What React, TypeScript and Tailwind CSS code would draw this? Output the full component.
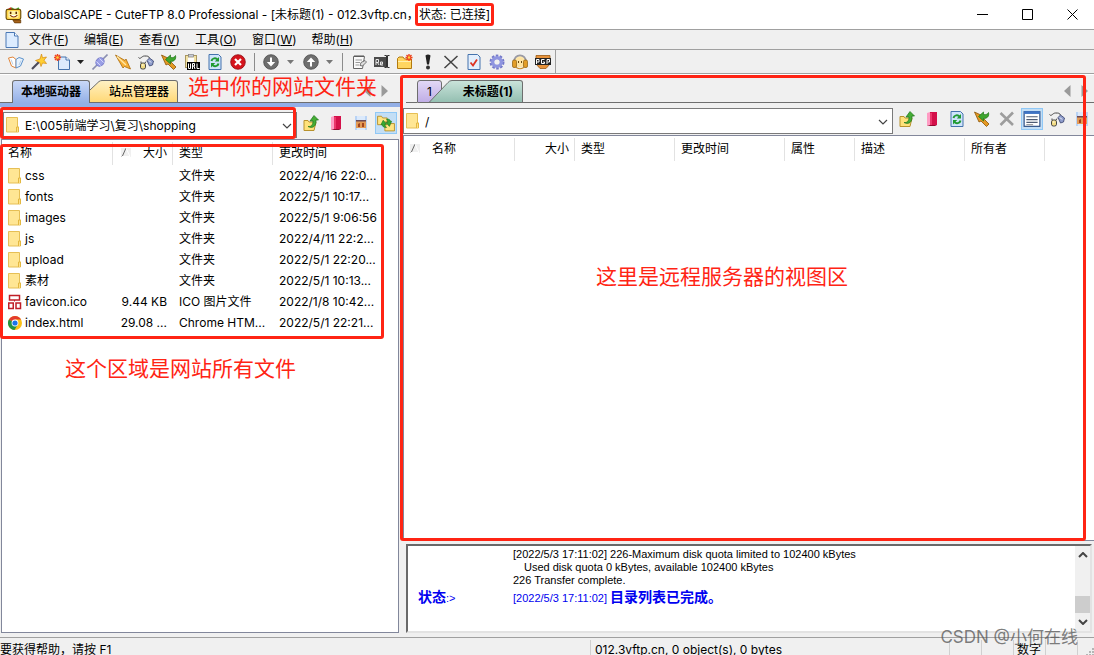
import React from "react";

type IconProps = { children: React.ReactNode; size?: number };

const Glyph: React.FC<IconProps> = ({ children, size = 16 }) => (
  <svg width={size} height={size} viewBox="0 0 16 16" className="shrink-0" aria-hidden="true">
    {children}
  </svg>
);

const AppIcon = () => (
  <Glyph size={18}>
    <path d="M3 3 6 1l3 2 3-2 1 2z" fill="#3fae2a" />
    <path d="M2 3l3-2 2 2z" fill="#e02020" />
    <rect x="1" y="3" width="13" height="9" rx="1.5" fill="#ffd64a" stroke="#6b4a00" />
    <rect x="3" y="4.500" width="9" height="6" rx="1" fill="#fff3a8" />
    <path d="M5 5v2M10 5v2" stroke="#5b2a00" strokeWidth="1.4" />
    <path d="M4.500 8c2 2.400 4.500 2.400 6.500 0" fill="#fff" stroke="#8a3a00" />
    <path d="M7 12.500h7v2.500H8.500z" fill="#a8641c" stroke="#5b3200" strokeWidth=".6" />
  </Glyph>
);

const PageIcon = () => (
  <Glyph>
    <path d="M2 .5h8.500L14 4v11.500H2z" fill="#dcecff" stroke="#4a78b5" />
    <path d="M10.500.5V4H14" fill="#fff" stroke="#4a78b5" />
  </Glyph>
);

const FolderIcon = () => (
  <Glyph>
    <path d="M.5.5h11v9.500h1v5H.5z" fill="#ffe694" stroke="#e6bf55" />
    <path d="M10.500 15v-5h2v5" fill="#ffe08a" stroke="#e3b840" />
  </Glyph>
);

const IcoFileIcon = () => (
  <Glyph>
    <g fill="#fff" stroke="#c01f28" strokeWidth="1.5">
      <rect x="1.500" y="1.500" width="10" height="4.500" />
      <rect x=".75" y="9" width="4.500" height="5.500" />
      <rect x="8" y="9" width="4.500" height="5.500" />
    </g>
    <path d="M6.500 6v1.500" fill="none" stroke="#c01f28" />
  </Glyph>
);

const ChromeIcon = () => (
  <Glyph>
    <circle cx="7" cy="8" r="7" fill="#fbc116" />
    <path d="M7 8 .9 4.500A7 7 0 0 1 13.100 4.500H7z" fill="#e33b2e" />
    <path d="M7 8 .9 4.500A7 7 0 0 0 6.500 15l3-5z" fill="#229342" />
    <circle cx="7" cy="8" r="3.400" fill="#fff" />
    <circle cx="7" cy="8" r="2.600" fill="#1a73e8" />
  </Glyph>
);

const BookIcon = () => (
  <Glyph>
    <path d="M.5 4 5 3l3 2.500V14l-4.500-2z" fill="#fff" stroke="#e0853a" />
    <path d="M8 5.500 11 3.500l4.500 1.500-3 7L8 14z" fill="#e8f2fc" stroke="#5d92cc" />
    <path d="m3 5.500 2 5M13 6.500l-2 4.500" stroke="#b9cfe6" />
  </Glyph>
);

const WandIcon = () => (
  <Glyph>
    <path d="m1 15 7-7" stroke="#4b4b5a" strokeWidth="2.200" />
    <path d="m10.500 0 1 3.800 4-.8-2.500 3.200 2.500 3.300-4-.5L10 12.500 8.800 8.500 4.500 6.500 9 5z" fill="#ffcf33" stroke="#d58a10" strokeWidth=".7" />
  </Glyph>
);

const NewIcon = () => (
  <Glyph>
    <path d="M4.500 3H12l3.500 3v9.500h-11z" fill="#dbeafd" stroke="#4573ad" />
    <path d="M12 3v3h3.500" fill="#fff" stroke="#4573ad" />
    <path d="M3.500 0v7M0 3.500h7M1 1l5 5M6 1 1 6" stroke="#f0441c" strokeWidth="1.500" />
    <circle cx="3.500" cy="3.500" r="1.300" fill="#ffd23a" />
  </Glyph>
);

const ConnectIcon = () => (
  <Glyph>
    <path d="m.5 15.500 5-5M10.500 5.500l5-5" stroke="#8b8fb0" strokeWidth="1.600" />
    <ellipse cx="8" cy="8" rx="4.500" ry="3.800" transform="rotate(-45 8 8)" fill="#9a9fe6" stroke="#7c80cc" />
    <path d="M4.500 7.500 8.500 11.500M7.500 4.500l4 4" stroke="#d5d7fb" />
  </Glyph>
);

const TransferIcon = () => (
  <Glyph>
    <path d="m.5 1 9.500 5.500 1-1.500 4.500 10-6-2.500-1.500 1.500z" fill="#f7b038" stroke="#a8690c" strokeWidth=".8" />
    <path d="m2 2.500 9 8.500" stroke="#ffe9a8" strokeWidth="1.300" />
  </Glyph>
);

const LinkIcon = () => (
  <Glyph>
    <path d="M.5 3.500c2 2.500 3-1.500 6-1.500s4 0 5 2" fill="none" stroke="#444" />
    <path d="M9 6.500 11.500 4l4 3-1 4-3 1z" fill="#8f9dcc" stroke="#36406b" strokeWidth=".8" />
    <path d="m11 6.500 2 2" stroke="#fff" />
    <path d="M3 9V7.500M7 9l1-1.500" stroke="#444" />
    <rect x="2.500" y="9" width="5" height="6" rx="1.800" fill="#f2dc83" stroke="#454545" />
    <path d="M4 11h1.500" stroke="#fff" />
  </Glyph>
);

const QuickIcon = () => (
  <Glyph>
    <path d="m.5 1 4.500 10 2-1 5.500 5.500 2.500-2.500-5.500-5.500L11 6z" fill="#e59a25" stroke="#8a5408" strokeWidth=".8" />
    <path d="m4.500 5.500 5-4.500v2.500C12 4 14 3 14.500 1.500c1 4-1.500 6-5 6V10z" fill="#3fa62f" stroke="#1d7414" strokeWidth=".7" />
  </Glyph>
);

const UrlIcon = () => (
  <Glyph>
    <rect x="1.500" y="1.500" width="11" height="12" fill="#f3e3a6" stroke="#a89660" />
    <rect x="4" y="3.500" width="6" height="6" fill="#fdfdfd" />
    <rect x="4.500" y=".5" width="5" height="2.500" fill="#c7cbd6" stroke="#777" strokeWidth=".6" />
    <rect x="3" y="8" width="13" height="8" fill="#000" />
    <path d="M4.500 9.500v5h2v-5M8.500 15V9.500h2v2.500h-2m1.500 0 1 3M13 9.500v5h2.500" fill="none" stroke="#fff" />
  </Glyph>
);

const RefreshIcon = () => (
  <Glyph>
    <path d="M2 .5h9.500L14 3v12.500H2z" fill="#cfe4fb" stroke="#4573ad" />
    <path d="M4.500 7C5 4 9 3.500 10.500 5.500" fill="none" stroke="#209a32" strokeWidth="2" />
    <path d="M12 3v4.500H7.800zM4 13.500V9h4.200z" fill="#209a32" />
    <path d="M11.500 9.500c-.5 3-4.500 3.500-6 1.500" fill="none" stroke="#209a32" strokeWidth="2" />
  </Glyph>
);

const StopIcon = () => (
  <Glyph>
    <circle cx="8" cy="8" r="7.300" fill="#d5141c" stroke="#8f0a10" strokeWidth=".8" />
    <path d="m5 5 6 6m0-6-6 6" stroke="#fff" strokeWidth="2.200" />
  </Glyph>
);

const RoundArrowIcon: React.FC<{ up?: boolean }> = ({ up }) => (
  <Glyph>
    <circle cx="8" cy="8" r="7.300" fill="#6e6e6e" stroke="#4a4a4a" strokeWidth=".8" />
    {up ? (
      <path d="M8 3.500 3.800 8H7v4.500h2V8h3.200z" fill="#fff" />
    ) : (
      <path d="M8 12.500 3.800 8H7V3.500h2V8h3.200z" fill="#fff" />
    )}
  </Glyph>
);

const EditIcon = () => (
  <Glyph>
    <path d="M2.500 2.500h11l-2 12h-9z" fill="#fafafa" stroke="#666" />
    <path d="M4 1v2m2-2v2m2-2v2m2-2v2m2-2v2" stroke="#555" />
    <path d="M4.500 6H11m-6.500 2.500H9m-4.500 2.500H8" stroke="#999" />
    <path d="m9 11.500 1-3 4-2 1.500 1.500-4 4z" fill="#ddd" stroke="#555" strokeWidth=".8" />
  </Glyph>
);

const RenameIcon = () => (
  <Glyph>
    <rect x="0" y="3" width="12" height="10" fill="#4b4b4b" />
    <path d="M2 11V5.500h2.500V8.500H2m1.500 0L5 11m1.500-3h2v2h-2V8zm0 0v3H9" fill="none" stroke="#e8e8e8" />
    <path d="M10.500 1.500h2v12h-2M15.500 1.500h-2v12h2" fill="none" stroke="#333" />
  </Glyph>
);

const NewFolderIcon = () => (
  <Glyph>
    <path d="M.5 4.500 2 3h4l1.500 2h7v9.500H.5z" fill="#ffd560" stroke="#b27a10" />
    <path d="M1 7.500h13" stroke="#fff0b0" />
    <path d="M12 0v7M8.500 3.500h7M9.500 1l5 5M14.500 1l-5 5" stroke="#ed401c" strokeWidth="1.400" />
    <circle cx="12" cy="3.500" r="1.200" fill="#ffd23a" />
  </Glyph>
);

const PriorityIcon = () => (
  <Glyph>
    <path d="M5.500 1.500Q8-.5 10.500 1.500L9 10.500H7z" fill="#222" />
    <circle cx="8" cy="13.500" r="2" fill="#333" />
  </Glyph>
);

const CrossIcon: React.FC<{ muted?: boolean }> = ({ muted }) => (
  <Glyph>
    {muted ? (
      <path d="m1.500 2 12.500 12m0-12.500L1.500 14" stroke="#9d9d9d" strokeWidth="2.600" />
    ) : (
      <path d="m1.500 2 13 12.500m0-12.500-13 12" stroke="#444" strokeWidth="1.500" />
    )}
  </Glyph>
);

const CheckPageIcon = () => (
  <Glyph>
    <path d="M2 .5h9.500L14 3v12.500H2z" fill="#e3effd" stroke="#4573ad" />
    <path d="m4.500 8.500 2.500 3 4-6" fill="none" stroke="#dd3322" strokeWidth="1.800" />
  </Glyph>
);

const GearIcon = () => (
  <Glyph>
    <circle cx="8" cy="8" r="6" fill="none" stroke="#7479c9" strokeWidth="3" strokeDasharray="2.400 1.370" />
    <circle cx="8" cy="8" r="4.300" fill="none" stroke="#8f95e0" strokeWidth="3.400" />
    <circle cx="8" cy="8" r="2.300" fill="#f0f0f0" />
  </Glyph>
);

const HeadsetIcon = () => (
  <Glyph>
    <path d="M2 8.500C1.500-1 14.500-1 14 8.500" fill="#ffe9b0" stroke="#9a9aa4" strokeWidth="1.800" />
    <circle cx="8" cy="8.500" r="5" fill="#ffe3a0" />
    <path d="M4 12.500q4 3.500 8 0v1.500q-4 2.500-8 0z" fill="#c98d2c" />
    <rect x=".5" y="6" width="4" height="7.500" rx="1.500" fill="#e39d28" stroke="#8a5b0c" strokeWidth=".7" />
    <rect x="11.500" y="6" width="4" height="7.500" rx="1.500" fill="#e39d28" stroke="#8a5b0c" strokeWidth=".7" />
    <path d="M6.500 7v2m3-2v2" stroke="#6b4a12" />
  </Glyph>
);

const PgpIcon = () => (
  <Glyph>
    <path d="M1 1.500h14V10l-4 4.500H5L1 10z" fill="#e7923a" stroke="#9a5a14" strokeWidth=".8" />
    <rect x="0" y="4" width="16" height="7" fill="#222" />
    <path d="M1.500 10V5.500H4V8H2M9.500 5.500h-3v4h3V8H8M12 10V5.500h2.500V8h-2" fill="none" stroke="#fff" />
  </Glyph>
);

const UpFolderIcon = () => (
  <Glyph>
    <path d="M1 5.500h4l1 1.500h7l-2 8.500H1z" fill="#ffe27a" stroke="#b8922c" />
    <path d="M5 11.500c3.500.5 5-2 5-5.500H7L11 .5 15.500 5H13c.5 6-3 9-8 6.500z" fill="#45ad36" stroke="#1e7318" strokeWidth=".7" />
  </Glyph>
);

const BookmarkIcon = () => (
  <Glyph>
    <path d="m3 2 3-1v13l-3 1z" fill="#ff9cc4" />
    <path d="M6 1h7v13H6z" fill="#d4104a" />
    <path d="M7 2v12" stroke="#ff5f8d" />
    <path d="M3 15h8l2-1H6z" fill="#8f0a30" />
  </Glyph>
);

const PictureIcon = () => (
  <Glyph>
    <rect x="2" y="1" width="12" height="14" fill="#b9d3f5" />
    <path d="M4 1h8v4H4z" fill="#dbe9fb" />
    <rect x="3" y="5" width="10" height="8" fill="#e39a55" />
    <path d="M3 5h10v1.500H3z" fill="#6b4a58" />
    <path d="M5 12V9l2-1v4zM9 12V8h2v4z" fill="#a2451f" />
    <path d="M4 13h8v2H4z" fill="#dbe9fb" />
  </Glyph>
);

const SyncFoldersIcon = () => (
  <Glyph size={18}>
    <path d="M.5 2h3.500l1 1.500h4v6H.5zM7 7h3l1 1.500h4.500V15H7z" fill="#ffe483" stroke="#b48d28" strokeWidth=".8" />
    <path d="m3.500 9.500 2-4 3 3.500H7c0 2 1 2 1.500 3-3 0-3.500-1-3.800-2.500zM13 6.500l-2 4.500-3-3.500h1.500C9.500 5.500 9 5.500 8.500 4.500c3 0 3.200 1 3.500 2z" fill="#36a832" stroke="#13701a" strokeWidth=".5" />
  </Glyph>
);

const DetailsIcon = () => (
  <Glyph size={18}>
    <rect x="1" y="1.500" width="14" height="13" fill="#fff" stroke="#24467e" />
    <rect x="1" y="1" width="14" height="2.500" fill="#3f74c4" />
    <path d="M3 6h10M3 8.500h10M3 11h10" stroke="#4d5b73" />
    <path d="M3 13h6" stroke="#999" />
  </Glyph>
);

const Triangle: React.FC<{ dir: "left" | "right" }> = ({ dir }) => (
  <svg width="7" height="12" viewBox="0 0 7 12" aria-hidden="true">
    <path d={dir === "left" ? "M6.500 0v12L0 6z" : "M.5 0v12L7 6z"} fill="#9a9a9a" />
  </svg>
);

const Chevron: React.FC<{ className?: string; up?: boolean; bold?: boolean }> = ({ className, up, bold }) => (
  <svg width="10" height="6" viewBox="0 0 10 6" className={className} aria-hidden="true">
    <path d={up ? "m1 5 4-4 4 4" : "m1 1 4 4 4-4"} fill="none" stroke="#444" strokeWidth={bold ? 2 : 1.2} />
  </svg>
);

const SortMark = () => (
  <svg width="10" height="9" viewBox="0 0 10 9" className="shrink-0" aria-hidden="true">
    <rect width="10" height="9" fill="#f0f0f0" />
    <path d="M1 9 5 0" stroke="#666" />
    <path d="m5 0 4 8.500H1" fill="none" stroke="#fff" />
  </svg>
);

const menus = [
  { label: "文件", key: "F" },
  { label: "编辑", key: "E" },
  { label: "查看", key: "V" },
  { label: "工具", key: "O" },
  { label: "窗口", key: "W" },
  { label: "帮助", key: "H" },
];

const files = [
  { name: "css", icon: <FolderIcon />, size: "", type: "文件夹", time: "2022/4/16 22:0..." },
  { name: "fonts", icon: <FolderIcon />, size: "", type: "文件夹", time: "2022/5/1 10:17..." },
  { name: "images", icon: <FolderIcon />, size: "", type: "文件夹", time: "2022/5/1 9:06:56" },
  { name: "js", icon: <FolderIcon />, size: "", type: "文件夹", time: "2022/4/11 22:2..." },
  { name: "upload", icon: <FolderIcon />, size: "", type: "文件夹", time: "2022/5/1 22:20..." },
  { name: "素材", icon: <FolderIcon />, size: "", type: "文件夹", time: "2022/5/1 10:13..." },
  { name: "favicon.ico", icon: <IcoFileIcon />, size: "9.44 KB", type: "ICO 图片文件", time: "2022/1/8 10:42..." },
  { name: "index.html", icon: <ChromeIcon />, size: "29.08 ...", type: "Chrome HTM...", time: "2022/5/1 22:21..." },
];

const ToolButton: React.FC<{ label: string; children: React.ReactNode }> = ({ label, children }) => (
  <button type="button" aria-label={label} className="flex h-[22px] w-[23px] shrink-0 items-center justify-center">
    {children}
  </button>
);

const DropButton: React.FC<{ label: string; muted?: boolean; narrow?: boolean }> = ({ label, muted, narrow }) => (
  <button
    type="button"
    aria-label={label}
    className={`flex h-[22px] shrink-0 items-center justify-center ${narrow ? "w-[15px]" : "w-[17px]"}`}
  >
    <svg width="7" height="4" viewBox="0 0 7 4" aria-hidden="true">
      <path d="M0 0h7L3.500 4z" fill={muted ? "#777" : "#222"} />
    </svg>
  </button>
);

const Divider = () => <div className="mr-1 ml-[5px] h-[18px] w-px shrink-0 bg-[#8c8c8c]" />;

const PaneButton: React.FC<{ label: string; active?: boolean; children: React.ReactNode }> = ({ label, active, children }) => (
  <button
    type="button"
    aria-label={label}
    className={`flex h-[22px] w-[22px] shrink-0 items-center justify-center ${
      active ? "border border-[#90c8f6] bg-[#c3def5]" : ""
    }`}
  >
    {children}
  </button>
);

const PathBox: React.FC<{ label: string; value: string; children?: React.ReactNode }> = ({ label, value, children }) => (
  <div className="relative h-[26px] min-w-0 flex-1 border border-[#7a7a7a] bg-white">
    <div className="pointer-events-none absolute top-1 left-0.5">
      <FolderIcon />
    </div>
    <select
      aria-label={label}
      defaultValue={value}
      className="block h-6 w-full appearance-none bg-transparent pt-0.5 pl-[21px] text-[12px] leading-5 outline-none"
    >
      <option>{value}</option>
    </select>
    <Chevron className="pointer-events-none absolute top-[10px] right-1" />
    {children}
  </div>
);

const MarkBox: React.FC<{ className: string }> = ({ className }) => (
  <div className={`pointer-events-none absolute z-20 rounded-[3px] border-3 border-[#ff2414] ${className}`} />
);

const MarkText: React.FC<{ className: string; children: React.ReactNode }> = ({ className, children }) => (
  <p className={`pointer-events-none absolute z-20 text-[21px] leading-6 whitespace-nowrap text-[#ff2414] ${className}`}>
    {children}
  </p>
);

const headCell = "relative h-[25px] px-1.5 font-normal";

const ColumnEdge = () => <span className="absolute top-0.5 right-0 h-[23px] w-px bg-[#e2e2e2]" />;

const LocalPane = () => (
  <section className="relative flex w-[400px] shrink-0 flex-col">
    <div className="flex h-[29px] items-end">
      <div className="h-px w-3 shrink-0 bg-[#6e6e6e]" />
      <button
        type="button"
        className="h-[23px] w-[78px] rounded-t-[3px] border border-b-0 border-[#6e6e6e] bg-linear-to-b from-[#c9d8f7] to-[#93afe6] text-[12px] font-bold"
      >
        本地驱动器
      </button>
      <button type="button" className="flex h-[23px] text-[12px]">
        <svg width="15" height="23" viewBox="0 0 15 23" aria-hidden="true">
          <defs>
            <linearGradient id="yellowTab" x1="0" y1="0" x2="0" y2="1">
              <stop offset="0" stopColor="#fff1c4" />
              <stop offset="1" stopColor="#ffd875" />
            </linearGradient>
          </defs>
          <path d="M0 10 9 1.500Q10.500.5 12 .5h3v22H0z" fill="url(#yellowTab)" />
          <path d="M0 10 9 1.500Q10.500.5 12 .5h3M0 22.500h15" fill="none" stroke="#6e6e6e" />
        </svg>
        <span className="h-[23px] w-[73px] rounded-tr-[3px] border border-l-0 border-[#6e6e6e] bg-linear-to-b from-[#fff1c4] to-[#ffd875] pr-2 text-right leading-[21px] font-medium">
          站点管理器
        </span>
      </button>
      <div className="flex h-[23px] flex-1 items-center justify-end gap-2.5 border-b border-[#6e6e6e] pr-3">
        <Triangle dir="left" />
        <Triangle dir="right" />
      </div>
    </div>
    <div className="h-1 shrink-0 bg-[#93afe6]" />
    <div className="flex h-8 shrink-0 items-start gap-[3px] px-[3px] pt-[5px]">
      <PathBox label="本地路径" value="E:\005前端学习\复习\shopping">
        <MarkBox className="-top-1.5 right-0 -bottom-0.5 -left-1" />
      </PathBox>
      <PaneButton label="向上"><UpFolderIcon /></PaneButton>
      <PaneButton label="书签"><BookmarkIcon /></PaneButton>
      <PaneButton label="缩略图"><PictureIcon /></PaneButton>
      <PaneButton label="同步浏览" active><SyncFoldersIcon /></PaneButton>
    </div>
    <div className="relative mx-px mb-1 min-h-0 flex-1 border border-[#82879b] bg-white">
      <table className="w-[381px] table-fixed text-left whitespace-nowrap">
        <colgroup>
          <col className="w-[111px]" />
          <col className="w-[60px]" />
          <col className="w-[100px]" />
          <col className="w-[110px]" />
        </colgroup>
        <thead>
          <tr>
            <th className={headCell}>名称<ColumnEdge /></th>
            <th className={`${headCell} text-right`}>
              <span className="flex items-center justify-between pl-0.5"><SortMark />大小</span>
              <ColumnEdge />
            </th>
            <th className={headCell}>类型<ColumnEdge /></th>
            <th className={headCell}>更改时间</th>
          </tr>
        </thead>
        <tbody>
          {files.map(file => (
            <tr key={file.name} className="h-[21px]">
              <td className="p-0 pl-1.5">
                <span className="flex items-center gap-px">{file.icon}{file.name}</span>
              </td>
              <td className="p-0 pr-1.5 text-right">{file.size}</td>
              <td className="p-0 pl-1.5">{file.type}</td>
              <td className="p-0 pl-1.5">{file.time}</td>
            </tr>
          ))}
        </tbody>
      </table>
      <MarkBox className="top-1 -left-0.5 h-[195px] w-[384px]" />
      <MarkText className="top-[217px] left-[63px]">这个区域是网站所有文件</MarkText>
    </div>
    <MarkText className="top-px left-[188px]">选中你的网站文件夹</MarkText>
  </section>
);

const RemotePane = () => (
  <section className="relative ml-[3px] flex min-w-0 flex-1 flex-col">
    <div className="flex h-[29px] shrink-0 items-end">
      <div className="ml-[3px] h-px w-[11px] shrink-0 bg-[#6e6e6e]" />
      <button
        type="button"
        className="h-[23px] w-[25px] rounded-t-[3px] border border-[#6e6e6e] bg-linear-to-b from-[#e2d8f6] to-[#c0aee6] text-[12px]"
      >
        1
      </button>
      <button type="button" className="-ml-[13px] flex h-[23px] text-[12px] font-bold">
        <svg width="23" height="23" viewBox="0 0 23 23" aria-hidden="true">
          <defs>
            <linearGradient id="greenTab" x1="0" y1="0" x2="0" y2="1">
              <stop offset="0" stopColor="#c9e3da" />
              <stop offset="1" stopColor="#94bfb1" />
            </linearGradient>
          </defs>
          <path d="M0 22.500 19 2.500Q20.500.5 23 .5v22z" fill="url(#greenTab)" />
          <path d="M0 22.500 19 2.500Q20.500.5 23 .5M0 22.500h23" fill="none" stroke="#6e6e6e" />
        </svg>
        <span className="h-[23px] w-[71px] rounded-tr-[3px] border border-l-0 border-[#6e6e6e] bg-linear-to-b from-[#c9e3da] to-[#94bfb1] pr-[9px] text-right leading-[21px]">
          未标题(1)
        </span>
      </button>
      <div className="flex h-[23px] flex-1 items-center justify-end gap-2.5 border-b border-[#6e6e6e] pr-1.5">
        <Triangle dir="left" />
        <Triangle dir="right" />
      </div>
    </div>
    <div className="flex h-8 shrink-0 items-start gap-[3px] pt-[5px] pr-px">
      <PathBox label="远程路径" value="/" />
      <PaneButton label="向上"><UpFolderIcon /></PaneButton>
      <PaneButton label="书签"><BookmarkIcon /></PaneButton>
      <PaneButton label="刷新"><RefreshIcon /></PaneButton>
      <PaneButton label="快速连接"><QuickIcon /></PaneButton>
      <PaneButton label="停止"><CrossIcon muted /></PaneButton>
      <PaneButton label="详细信息" active><DetailsIcon /></PaneButton>
      <PaneButton label="链接"><LinkIcon /></PaneButton>
      <PaneButton label="缩略图"><PictureIcon /></PaneButton>
    </div>
    <div className="relative min-h-0 flex-1 border border-r-0 border-[#82879b] bg-white">
      <table className="w-[641px] table-fixed text-left whitespace-nowrap">
        <colgroup>
          <col className="w-[111px]" />
          <col className="w-[60px]" />
          <col className="w-[100px]" />
          <col className="w-[110px]" />
          <col className="w-[70px]" />
          <col className="w-[110px]" />
          <col className="w-[80px]" />
        </colgroup>
        <thead>
          <tr>
            <th className={headCell}>
              <span className="flex items-center gap-3"><SortMark />名称</span>
              <ColumnEdge />
            </th>
            <th className={`${headCell} text-right`}>大小<ColumnEdge /></th>
            {["类型", "更改时间", "属性", "描述", "所有者"].map(title => (
              <th key={title} className={headCell}>{title}<ColumnEdge /></th>
            ))}
          </tr>
        </thead>
      </table>
      <MarkText className="top-[129px] left-[192px]">这里是远程服务器的视图区</MarkText>
    </div>
    <div className="mt-[3px] mr-0.5 mb-1 ml-[3px] flex h-[89px] shrink-0 border-2 border-t-[#696969] border-r-[#e3e3e3] border-b-[#e3e3e3] border-l-[#696969] bg-white">
      <div className="min-w-0 flex-1 overflow-hidden pt-0.5 pl-[105px] font-['Liberation_Sans','Noto_Sans_CJK_SC',sans-serif] text-[11px] leading-[13px] whitespace-nowrap">
        <p>[2022/5/3 17:11:02] 226-Maximum disk quota limited to 102400 kBytes</p>
        <p className="pl-[11px]">Used disk quota 0 kBytes, available 102400 kBytes</p>
        <p>226 Transfer complete.</p>
        <p className="-ml-[95px] flex leading-5 text-[#0000f0]">
          <span className="w-[95px]"><b className="text-[14px]">状态</b>:&gt;</span>
          <span>[2022/5/3 17:11:02] <b className="text-[14px]">目录列表已完成。</b></span>
        </p>
      </div>
      <div className="flex w-[15px] flex-col items-center bg-[#f0f0f0] py-1.5">
        <Chevron up bold />
        <div className="mt-auto mb-1.5 h-[17px] w-full bg-[#cdcdcd]" />
        <Chevron bold />
      </div>
    </div>
    <MarkBox className="top-px right-2 bottom-24 -left-[3px]" />
  </section>
);

export default function App() {
  return (
    <div className="relative flex h-screen flex-col overflow-hidden bg-[#f0f0f0] font-['Inter','Noto_Sans_CJK_SC',sans-serif] text-[12px] leading-4 text-black">
      <header className="flex h-[30px] shrink-0 items-center border-b border-[#a0a0a0] bg-white pr-4 pl-[5px]">
        <AppIcon />
        <h1 className="ml-1 whitespace-nowrap">
          GlobalSCAPE - CuteFTP 8.0 Professional - [未标题(1) - 012.3vftp.cn，
          <span className="relative">
            状态: 已连接]
            <MarkBox className="-inset-x-1 -top-1 -bottom-1" />
          </span>
        </h1>
        <div className="ml-auto flex items-center gap-[34px]">
          <button type="button" aria-label="最小化">
            <svg width="11" height="11" viewBox="0 0 11 11"><path d="M0 5.500h11" stroke="#000" /></svg>
          </button>
          <button type="button" aria-label="最大化">
            <svg width="11" height="11" viewBox="0 0 11 11"><path d="M.5.5h10v10H.5z" fill="none" stroke="#000" /></svg>
          </button>
          <button type="button" aria-label="关闭">
            <svg width="11" height="11" viewBox="0 0 11 11"><path d="m.5.5 10 10m0-10-10 10" stroke="#000" /></svg>
          </button>
        </div>
      </header>

      <nav className="flex h-5 shrink-0 items-center gap-[15px] border-b border-[#a0a0a0] pl-1">
        <div className="-mr-1.5"><PageIcon /></div>
        {menus.map(menu => (
          <button key={menu.key} type="button">
            {menu.label}(<u>{menu.key}</u>)
          </button>
        ))}
      </nav>

      <div className="flex h-6 shrink-0 items-center border-b border-[#a0a0a0] pl-1 shadow-[0_1px_0_#ffffff]">
        <ToolButton label="站点管理器"><BookIcon /></ToolButton>
        <ToolButton label="连接向导"><WandIcon /></ToolButton>
        <ToolButton label="新建"><NewIcon /></ToolButton>
        <DropButton label="新建选项" narrow />
        <ToolButton label="连接"><ConnectIcon /></ToolButton>
        <ToolButton label="快速连接"><TransferIcon /></ToolButton>
        <ToolButton label="断开"><LinkIcon /></ToolButton>
        <ToolButton label="重新连接"><QuickIcon /></ToolButton>
        <ToolButton label="粘贴地址"><UrlIcon /></ToolButton>
        <ToolButton label="刷新"><RefreshIcon /></ToolButton>
        <ToolButton label="停止"><StopIcon /></ToolButton>
        <Divider />
        <ToolButton label="下载"><RoundArrowIcon /></ToolButton>
        <DropButton label="下载选项" muted />
        <ToolButton label="上传"><RoundArrowIcon up /></ToolButton>
        <DropButton label="上传选项" muted narrow />
        <Divider />
        <ToolButton label="编辑"><EditIcon /></ToolButton>
        <ToolButton label="重命名"><RenameIcon /></ToolButton>
        <ToolButton label="新建文件夹"><NewFolderIcon /></ToolButton>
        <ToolButton label="优先级"><PriorityIcon /></ToolButton>
        <ToolButton label="删除"><CrossIcon /></ToolButton>
        <ToolButton label="属性"><CheckPageIcon /></ToolButton>
        <ToolButton label="设置"><GearIcon /></ToolButton>
        <ToolButton label="支持"><HeadsetIcon /></ToolButton>
        <ToolButton label="加密"><PgpIcon /></ToolButton>
        <div className="ml-px h-full w-px bg-[#a0a0a0]" />
      </div>

      <main className="flex min-h-0 flex-1">
        <LocalPane />
        <RemotePane />
      </main>

      <footer className="flex h-[18px] shrink-0 items-start border-t border-[#a0a0a0] pt-0.5 leading-5">
        <p className="w-[590px] shrink-0">要获得帮助，请按 F1</p>
        <p className="min-w-0 flex-1 border-l border-[#d0d0d0] pl-1 whitespace-nowrap">012.3vftp.cn, 0 object(s), 0 bytes</p>
        <div className="h-5 w-8 border-l border-[#d0d0d0]" />
        <div className="h-5 w-8 border-l border-[#d0d0d0]" />
        <div className="h-5 w-8 border-l border-[#d0d0d0] pl-[3px]">数字</div>
        <div className="h-5 w-8 border-l border-[#d0d0d0]" />
        <div className="h-5 w-[17px] border-l border-[#d0d0d0] pt-2 pl-2">
          <svg width="8" height="8" viewBox="0 0 8 8" aria-hidden="true">
            <path d="M6 0h2v2H6zM3 3h2v2H3zM6 3h2v2H6zM0 6h2v2H0zM3 6h2v2H3zM6 6h2v2H6z" fill="#b5b5b5" />
          </svg>
        </div>
      </footer>
      <p className="pointer-events-none absolute right-4 bottom-1.5 text-[17px] leading-6 text-[#555555]/75">CSDN @小何在线</p>
    </div>
  );
}
